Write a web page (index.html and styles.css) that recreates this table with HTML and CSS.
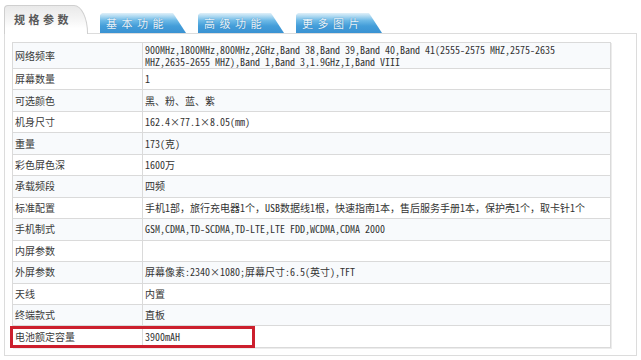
FILE: index.html
```html
<!DOCTYPE html>
<html lang="zh-CN">
<head>
<meta charset="utf-8">
<title>规格参数</title>
<link rel="stylesheet" href="styles.css">
</head>
<body>
<div class="wrap">
  <div class="tabs">
    <div class="tab tab-active">规格参数</div>
    <div class="tab tab-blue"><span>基本功能</span></div>
    <div class="tab tab-blue"><span>高级功能</span></div>
    <div class="tab tab-blue"><span>更多图片</span></div>
  </div>
  <div class="panel">
    <table class="spec">
      <colgroup><col class="c-label"><col></colgroup>
      <tbody>
        <tr class="tall odd"><td class="lab">网络频率</td><td class="val">900MHz,1800MHz,800MHz,2GHz,Band 38,Band 39,Band 40,Band 41(2555-2575 MHZ,2575-2635<br>MHZ,2635-2655 MHZ),Band 1,Band 3,1.9GHz,I,Band VIII</td></tr>
        <tr><td class="lab">屏幕数量</td><td class="val">1</td></tr>
        <tr class="odd"><td class="lab">可选颜色</td><td class="val">黑、粉、蓝、紫</td></tr>
        <tr><td class="lab">机身尺寸</td><td class="val">162.4×77.1×8.05(mm)</td></tr>
        <tr class="odd"><td class="lab">重量</td><td class="val">173(克)</td></tr>
        <tr><td class="lab">彩色屏色深</td><td class="val">1600万</td></tr>
        <tr class="odd"><td class="lab">承载频段</td><td class="val">四频</td></tr>
        <tr><td class="lab">标准配置</td><td class="val">手机1部，旅行充电器1个，USB数据线1根，快速指南1本，售后服务手册1本，保护壳1个，取卡针1个</td></tr>
        <tr class="odd"><td class="lab">手机制式</td><td class="val">GSM,CDMA,TD-SCDMA,TD-LTE,LTE FDD,WCDMA,CDMA 2000</td></tr>
        <tr><td class="lab">内屏参数</td><td class="val"></td></tr>
        <tr class="odd"><td class="lab">外屏参数</td><td class="val">屏幕像素:2340×1080;屏幕尺寸:6.5(英寸),TFT</td></tr>
        <tr><td class="lab">天线</td><td class="val">内置</td></tr>
        <tr class="odd"><td class="lab">终端款式</td><td class="val">直板</td></tr>
        <tr><td class="lab">电池额定容量</td><td class="val">3900mAH</td></tr>
      </tbody>
    </table>
    <div class="highlight"></div>
  </div>
</div>
</body>
</html>
```

FILE: styles.css
```css
html, body {
  margin: 0;
  padding: 0;
  background: #ffffff;
}

.wrap {
  padding: 5px 0 0 4px;
  width: 633px;
}

.tabs {
  display: flex;
  align-items: flex-end;
  gap: 12px;
  height: 28px;
  position: relative;
  z-index: 2;
}

.tab {
  box-sizing: border-box;
  font-family: "Noto Sans CJK SC", sans-serif;
  white-space: nowrap;
}

.tab-active {
  width: 84px;
  height: 29px;
  margin-bottom: -1px;
  padding: 5px 0 0 9px;
  border: 1px solid #cfcfcf;
  border-bottom: none;
  border-radius: 4px 14px 0 0 / 4px 28px 0 0;
  background: linear-gradient(to bottom, #e9e9e9 0%, #f4f4f4 45%, #ffffff 80%);
  color: #595959;
  font-size: 11px;
  font-weight: bold;
  letter-spacing: 3.5px;
  line-height: 16px;
}

.tab-blue {
  width: 86px;
  height: 20px;
  padding: 2px 0 0 6px;
  clip-path: polygon(0 2px, 2px 0, calc(100% - 13px) 0, 100% 100%, 0 100%);
  background: linear-gradient(to bottom, #e0f0f9 0%, #b3dbf2 15%, #6cb9e6 38%, #439dd9 65%, #3a92d2 100%);
  color: #e9f5fc;
  font-size: 11px;
  letter-spacing: 4.5px;
  line-height: 16px;
  text-shadow: 0 0 1px #2a6fa6;
}

.panel {
  position: relative;
  box-sizing: border-box;
  width: 633px;
  height: 323px;
  border: 1px solid #dcdcdc;
  padding: 8px 0 0 7px;
  background: #ffffff;
}

.spec {
  border-collapse: collapse;
  table-layout: fixed;
  width: 599px;
  box-shadow: 1px 1px 0 #ececec;
}

.c-label {
  width: 130px;
}

.spec td {
  border: 1px solid #dadada;
  height: 21.46px;
  padding: 0 3px;
  box-sizing: border-box;
  vertical-align: middle;
  font-size: 10px;
  line-height: 12px;
  color: #333333;
  white-space: nowrap;
  overflow: hidden;
}

.spec tr.tall td {
  height: 26px;
  padding-top: 1px;
}

.spec tr.odd td {
  background: #f8fafc;
}

.spec td.lab {
  font-family: "Noto Sans CJK SC", sans-serif;
  color: #3a3a3a;
  padding-left: 2px;
}

.spec td.val {
  font-family: "Noto Sans Mono CJK SC", "Noto Sans CJK SC", sans-serif;
  padding-left: 2px;
}

.highlight {
  position: absolute;
  left: 5px;
  top: 292px;
  width: 245px;
  height: 22px;
  box-sizing: border-box;
  border: 3px solid #cc1f2d;
  pointer-events: none;
}
```
